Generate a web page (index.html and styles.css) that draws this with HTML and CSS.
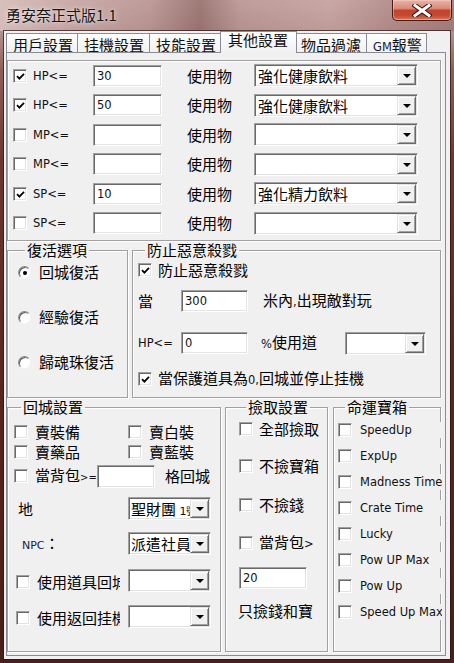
FILE: index.html
```html
<!DOCTYPE html>
<html lang="zh-Hant">
<head>
<meta charset="utf-8">
<title>勇安奈正式版1.1</title>
<link rel="stylesheet" href="styles.css">
</head>
<body>
<div class="window">
  <div class="titlebar">
    <span class="title">勇安奈正式版1.1</span>
    <div class="close">
      <svg width="20" height="13" viewBox="0 0 20 13">
        <path d="M3 1.5 L17 11.5 M17 1.5 L3 11.5" stroke="#3a1410" stroke-width="5" stroke-linecap="square" fill="none"/>
        <path d="M3 1.5 L17 11.5 M17 1.5 L3 11.5" stroke="#ffffff" stroke-width="3" stroke-linecap="square" fill="none"/>
      </svg>
    </div>
  </div>
  <div class="client">
    <div class="tabs">
      <div class="tab t1">用戶設置</div>
      <div class="tab t2">挂機設置</div>
      <div class="tab t3">技能設置</div>
      <div class="tab t4 active">其他設置</div>
      <div class="tab t5">物品過濾</div>
      <div class="tab t6"><span class="en">GM</span>報警</div>
    </div>
    <div class="panel">
      <fieldset class="potions">
        <div class="prow">
          <span class="cb"><svg class="chk" width="9" height="9" viewBox="0 0 9 9"><path d="M1 4.2 L3.4 6.6 L8 1.8" stroke="#000" stroke-width="1.8" fill="none"/></svg></span>
          <span class="en">HP&lt;=</span>
          <span class="field"><span class="en">30</span></span>
          <span></span>
          <span>使用物</span>
          <span class="combo"><span class="val">強化健康飲料</span><span class="btn"></span></span>
        </div>
        <div class="prow">
          <span class="cb"><svg class="chk" width="9" height="9" viewBox="0 0 9 9"><path d="M1 4.2 L3.4 6.6 L8 1.8" stroke="#000" stroke-width="1.8" fill="none"/></svg></span>
          <span class="en">HP&lt;=</span>
          <span class="field"><span class="en">50</span></span>
          <span></span>
          <span>使用物</span>
          <span class="combo"><span class="val">強化健康飲料</span><span class="btn"></span></span>
        </div>
        <div class="prow">
          <span class="cb"></span>
          <span class="en">MP&lt;=</span>
          <span class="field"></span>
          <span></span>
          <span>使用物</span>
          <span class="combo"><span class="val"></span><span class="btn"></span></span>
        </div>
        <div class="prow">
          <span class="cb"></span>
          <span class="en">MP&lt;=</span>
          <span class="field"></span>
          <span></span>
          <span>使用物</span>
          <span class="combo"><span class="val"></span><span class="btn"></span></span>
        </div>
        <div class="prow">
          <span class="cb"><svg class="chk" width="9" height="9" viewBox="0 0 9 9"><path d="M1 4.2 L3.4 6.6 L8 1.8" stroke="#000" stroke-width="1.8" fill="none"/></svg></span>
          <span class="en">SP&lt;=</span>
          <span class="field"><span class="en">10</span></span>
          <span></span>
          <span>使用物</span>
          <span class="combo"><span class="val">強化精力飲料</span><span class="btn"></span></span>
        </div>
        <div class="prow">
          <span class="cb"></span>
          <span class="en">SP&lt;=</span>
          <span class="field"></span>
          <span></span>
          <span>使用物</span>
          <span class="combo"><span class="val"></span><span class="btn"></span></span>
        </div>
      </fieldset>

      <div class="midrow">
        <fieldset class="revive">
          <legend>復活選項</legend>
          <div class="rrow"><span class="radio on"></span><span>回城復活</span></div>
          <div class="rrow"><span class="radio"></span><span>經驗復活</span></div>
          <div class="rrow"><span class="radio"></span><span>歸魂珠復活</span></div>
        </fieldset>
        <fieldset class="pk">
          <legend>防止惡意殺戮</legend>
          <div class="krow k1">
            <span class="cb"><svg class="chk" width="9" height="9" viewBox="0 0 9 9"><path d="M1 4.2 L3.4 6.6 L8 1.8" stroke="#000" stroke-width="1.8" fill="none"/></svg></span>
            <span class="lbl">防止惡意殺戮</span>
          </div>
          <div class="krow k2">
            <span class="klbl">當</span>
            <span class="field kfield"><span class="en">300</span></span>
            <span class="ktxt">米內<span class="en">,</span>出現敵對玩</span>
          </div>
          <div class="krow k3">
            <span class="klbl en">HP&lt;=</span>
            <span class="field kfield"><span class="en">0</span></span>
            <span class="ktxt2"><span class="en">%</span>使用道</span>
            <span class="combo kcombo"><span class="val"></span><span class="btn"></span></span>
          </div>
          <div class="krow k4">
            <span class="cb"><svg class="chk" width="9" height="9" viewBox="0 0 9 9"><path d="M1 4.2 L3.4 6.6 L8 1.8" stroke="#000" stroke-width="1.8" fill="none"/></svg></span>
            <span class="lbl">當保護道具為<span class="en">0,</span>回城並停止挂機</span>
          </div>
        </fieldset>
      </div>

      <div class="botrow">
        <fieldset class="town">
          <legend>回城設置</legend>
          <div class="trow t-r1">
            <span class="pair"><span class="cb"></span><span class="lbl">賣裝備</span></span>
            <span class="pair"><span class="cb"></span><span class="lbl">賣白裝</span></span>
          </div>
          <div class="trow t-r2">
            <span class="pair"><span class="cb"></span><span class="lbl">賣藥品</span></span>
            <span class="pair"><span class="cb"></span><span class="lbl">賣藍裝</span></span>
          </div>
          <div class="trow3">
            <span class="cb"></span>
            <span class="lbl">當背包<span class="en small">&gt;=</span></span>
            <span class="field bagfield"></span>
            <span class="gtxt">格回城</span>
          </div>
          <div class="srow s-r4">
            <span class="slbl map">地</span>
            <span class="combo scombo"><span class="val">聖財團 <span class="en num">1號</span></span><span class="btn"></span></span>
          </div>
          <div class="srow s-r5">
            <span class="slbl npc"><span class="en">NPC</span>：</span>
            <span class="combo scombo"><span class="val">派遣社員</span><span class="btn"></span></span>
          </div>
          <div class="srow s-r6">
            <span class="slbl chkl"><span class="cb"></span><span class="cut">使用道具回城</span></span>
            <span class="combo scombo"><span class="val"></span><span class="btn"></span></span>
          </div>
          <div class="srow s-r7">
            <span class="slbl chkl"><span class="cb"></span><span class="cut">使用返回挂機</span></span>
            <span class="combo scombo"><span class="val"></span><span class="btn"></span></span>
          </div>
        </fieldset>

        <fieldset class="pick">
          <legend>撿取設置</legend>
          <div class="pkrow p1"><span class="cb"></span><span class="lbl">全部撿取</span></div>
          <div class="pkrow p2"><span class="cb"></span><span class="lbl">不撿寶箱</span></div>
          <div class="pkrow p3"><span class="cb"></span><span class="lbl">不撿錢</span></div>
          <div class="pkrow p4"><span class="cb"></span><span class="lbl">當背包<span class="en">&gt;</span></span></div>
          <div class="field pickfield"><span class="en">20</span></div>
          <div class="pktxt">只撿錢和寶</div>
        </fieldset>

        <fieldset class="box">
          <legend>命運寶箱</legend>
          <div class="brow"><span class="cb"></span><span class="en blbl">SpeedUp</span></div>
          <div class="brow"><span class="cb"></span><span class="en blbl">ExpUp</span></div>
          <div class="brow"><span class="cb"></span><span class="en blbl">Madness Time</span></div>
          <div class="brow"><span class="cb"></span><span class="en blbl">Crate Time</span></div>
          <div class="brow"><span class="cb"></span><span class="en blbl">Lucky</span></div>
          <div class="brow"><span class="cb"></span><span class="en blbl">Pow UP Max</span></div>
          <div class="brow"><span class="cb"></span><span class="en blbl">Pow Up</span></div>
          <div class="brow"><span class="cb"></span><span class="en blbl">Speed Up Max</span></div>
        </fieldset>
      </div>
    </div>
  </div>
</div>
</body>
</html>
```
FILE: styles.css
```css
* { box-sizing: border-box; }
html, body { margin: 0; padding: 0; }
body {
  width: 454px;
  height: 663px;
  overflow: hidden;
  background: #3a1e1a;
  font: 15px/16px "Noto Sans CJK TC", "Noto Sans CJK SC", sans-serif;
  color: #000;
}
.en { font-family: "DejaVu Sans", sans-serif; font-size: 11.5px; font-weight: 400; color: #111; }
.small { font-size: 10px; }

.window {
  width: 454px;
  height: 663px;
  display: flex;
  flex-direction: column;
  background: linear-gradient(180deg, #c9aba7 0, #b89593 28px, #8e5f5a 70px, #6e3630 160px, #57261f 400px, #4a1f19 663px);
}

/* title bar */
.titlebar {
  height: 31px;
  flex: none;
  display: flex;
  justify-content: space-between;
  align-items: flex-start;
  background: linear-gradient(90deg, rgba(222,200,198,.75) 0, rgba(205,178,176,.55) 60px, rgba(178,140,138,.45) 150px, rgba(125,85,83,.55) 200px, rgba(178,142,140,.45) 240px, rgba(200,165,163,.45) 330px, rgba(160,118,116,.5) 400px, rgba(140,100,98,.55) 454px);
}
.title {
  margin: 6px 0 0 6px;
  line-height: 17px;
  color: #151515;
  text-shadow: 0 0 6px rgba(255,255,255,.8), 0 0 2px rgba(255,255,255,.6);
}
.close {
  width: 60px;
  height: 21px;
  margin-right: 2px;
  border: 1px solid #4a1a14;
  border-top: 0;
  border-radius: 0 0 5px 5px;
  background: linear-gradient(180deg, #e8b4a8 0, #d98a7a 42%, #c2432e 52%, #c44a33 78%, #d8785a 100%);
  box-shadow: inset 0 0 0 1px rgba(255,215,205,.45);
  display: flex;
  align-items: center;
  justify-content: center;
}

/* client */
.client {
  margin-left: 4px;
  width: 446px;
  height: 628px;
  flex: none;
  background: #f0f0f0;
  box-shadow: 0 0 0 1px rgba(40,20,18,.7);
}
.tabs {
  height: 21px;
  display: flex;
  align-items: flex-end;
  padding-left: 2px;
}
.tab {
  height: 19px;
  padding: 3px 0 0 6px;
  border-top: 1px solid #898c95;
  border-right: 1px solid #898c95;
  background: linear-gradient(180deg, #fdfdfd, #f1f1f1);
  overflow: hidden;
  white-space: nowrap;
  line-height: 16px;
  color: #111;
}
.t1 { width: 72px; border-left: 1px solid #898c95; }
.t2 { width: 72px; }
.t3 { width: 72px; }
.t4 { width: 77px; margin-left: -2px; }
.t5 { width: 72px; margin-left: -2px; }
.t6 { width: 60px; }
.tab.active {
  height: 22px;
  margin-bottom: -1px;
  padding: 0 0 0 7px;
  border-left: 1px solid #898c95;
  background: linear-gradient(180deg, #ffffff, #f0f0f0);
  position: relative;
  z-index: 1;
}
.t6 .en { font-size: 11.5px; color: #1a1a3a; }

.panel {
  margin-left: 2px;
  width: 440px;
  height: 604px;
  border: 1px solid #898c95;
  background: #f0f0f0;
  display: flex;
  flex-direction: column;
}

/* group boxes */
fieldset {
  margin: 0;
  padding: 0;
  border: 1px solid #a0a0a0;
  box-shadow: inset 1px 1px 0 #fff, 1px 1px 0 #fff;
  min-width: 0;
}
legend {
  margin-left: 7px;
  padding: 0 2px;
  line-height: 16px;
}

/* common widgets */
.cb {
  width: 14px;
  height: 14px;
  flex: none;
  background: #fff;
  border: 1px solid;
  border-color: #a0a0a0 #fff #fff #a0a0a0;
  box-shadow: inset 1px 1px 0 #696969, inset -1px -1px 0 #e3e3e3;
  display: flex;
  align-items: center;
  justify-content: center;
}
.chk { display: block; margin: 1px 0 0 1px; }
.radio {
  width: 13px;
  height: 13px;
  flex: none;
  border-radius: 50%;
  background: #fff;
  border: 1px solid;
  border-color: #8a8a8a #f4f4f4 #f4f4f4 #8a8a8a;
  box-shadow: inset 1px 1px 0 #5a5a5a;
  display: flex;
  align-items: center;
  justify-content: center;
}
.radio.on::after {
  content: "";
  width: 4px;
  height: 4px;
  border-radius: 50%;
  background: #000;
  margin: 1px 0 0 1px;
}
.field {
  height: 22px;
  background: #fff;
  border: 1px solid;
  border-color: #a0a0a0 #fff #fff #a0a0a0;
  box-shadow: inset 1px 1px 0 #696969, inset -1px -1px 0 #e3e3e3;
  padding-left: 3px;
  line-height: 20px;
  display: flex;
  align-items: center;
}
.combo {
  height: 23px;
  display: flex;
  padding: 1px;
  background: #fff;
  border: 1px solid;
  border-color: #a0a0a0 #fff #fff #a0a0a0;
  box-shadow: inset 1px 1px 0 #696969, inset -1px -1px 0 #e3e3e3;
}
.combo .val {
  flex: 1;
  min-width: 0;
  padding-left: 2px;
  line-height: 19px;
  overflow: hidden;
  white-space: nowrap;
}
.combo .btn {
  width: 19px;
  height: 19px;
  flex: none;
  background: #f0f0f0;
  border: 1px solid;
  border-color: #e3e3e3 #696969 #696969 #e3e3e3;
  box-shadow: inset 1px 1px 0 #fff, inset -1px -1px 0 #a0a0a0;
  display: flex;
  align-items: center;
  justify-content: center;
}
.combo .btn::after {
  content: "";
  margin-top: 1px;
  border-top: 4px solid #000;
  border-left: 4px solid transparent;
  border-right: 4px solid transparent;
}

/* potions */
.potions {
  margin-top: 7px;
  width: 434px;
  height: 181px;
  padding-left: 5px;
}
.prow {
  display: grid;
  grid-template-columns: 20px 60px 69px 25px 67px 164px;
  align-items: center;
  height: 29.5px;
}

/* middle row */
.midrow {
  display: flex;
  gap: 4px;
  margin-top: 1px;
  height: 156px;
}
.revive {
  width: 121px;
  padding-left: 10px;
  display: flex;
  flex-direction: column;
  gap: 17px;
}
.rrow {
  height: 28px;
  display: flex;
  align-items: center;
  gap: 8px;
}
.pk {
  width: 309px;
  padding-left: 5px;
}
.krow {
  display: flex;
  align-items: center;
  height: 24px;
}
.k1 .lbl, .k4 .lbl { margin-left: 6px; white-space: nowrap; }
.k2 { margin-top: 7px; }
.k3 { margin-top: 18px; }
.k4 { margin-top: 12px; }
.klbl { width: 43px; flex: none; }
.kfield { width: 67px; flex: none; }
.ktxt { margin-left: 15px; white-space: nowrap; }
.ktxt2 { margin-left: 13px; width: 84px; flex: none; white-space: nowrap; }
.kcombo { width: 81px; }

/* bottom row */
.botrow {
  display: flex;
  margin-top: 1px;
  height: 253px;
}
.town { width: 214px; padding-left: 6px; padding-top: 7px; }
.pick { width: 103px; margin-left: 4px; padding-left: 13px; }
.box { width: 108px; margin-left: 5px; padding-left: 4px; padding-top: 2px; }

.trow {
  display: grid;
  grid-template-columns: 114px auto;
  height: 20px;
  align-items: center;
}
.pair { display: flex; align-items: center; gap: 7px; white-space: nowrap; }
.trow3 {
  display: flex;
  align-items: center;
  height: 24px;
  margin-top: 2px;
}
.trow3 .lbl { margin-left: 7px; width: 62px; white-space: nowrap; flex: none; }
.bagfield { width: 58px; height: 23px; flex: none; }
.gtxt { margin-left: 10px; white-space: nowrap; }

.srow {
  display: grid;
  grid-template-columns: 114px 83px;
  align-items: center;
  height: 23px;
}
.s-r4 { margin-top: 8.5px; }
.s-r5 { margin-top: 12px; }
.s-r6 { margin-top: 14px; }
.s-r7 { margin-top: 13px; }
.map { padding-left: 4px; padding-top: 2px; }
.npc { padding-left: 8px; padding-top: 3px; }
.npc .en { font-size: 11px; color: #1a1a3a; }
.chkl { display: flex; align-items: center; padding-left: 2px; padding-top: 3px; }
.chkl .cut {
  margin-left: 7px;
  width: 83px;
  overflow: hidden;
  white-space: nowrap;
  flex: none;
}
.scombo .val { padding-left: 1px; }
.num { font-size: 11px; }

.pkrow {
  display: flex;
  align-items: center;
  gap: 6px;
  height: 20px;
  white-space: nowrap;
}
.p1 { margin-top: 4px; }
.p2 { margin-top: 17px; }
.p3 { margin-top: 19px; }
.p4 { margin-top: 18px; }
.pickfield { width: 68px; margin-top: 14px; }
.pktxt { margin-top: 12px; margin-left: -1px; height: 20px; line-height: 20px; white-space: nowrap; }

.brow {
  display: flex;
  align-items: center;
  height: 26px;
}
.blbl {
  margin-left: 8px;
  width: 82px;
  flex: none;
  overflow: hidden;
  white-space: nowrap;
  background: #f0f0f0;
  line-height: 16px;
  position: relative;
}
```
